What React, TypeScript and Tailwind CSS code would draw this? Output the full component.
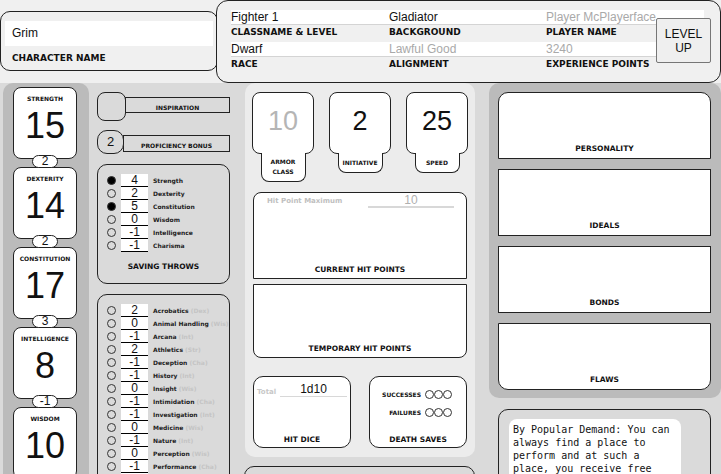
const label = "font-['DejaVu_Sans',sans-serif] font-bold uppercase text-[#111]"
const smallText = "font-['DejaVu_Sans',sans-serif] font-bold"

const abilities = [
  { name: 'Strength', score: 15, mod: '2' },
  { name: 'Dexterity', score: 14, mod: '2' },
  { name: 'Constitution', score: 17, mod: '3' },
  { name: 'Intelligence', score: 8, mod: '-1' },
  { name: 'Wisdom', score: 10, mod: '0' },
  { name: 'Charisma', score: 8, mod: '-1' },
]

const saves: [string, string, boolean][] = [
  ['Strength', '4', true],
  ['Dexterity', '2', false],
  ['Constitution', '5', true],
  ['Wisdom', '0', false],
  ['Intelligence', '-1', false],
  ['Charisma', '-1', false],
]

const skills: [string, string, string][] = [
  ['Acrobatics', 'Dex', '2'],
  ['Animal Handling', 'Wis', '0'],
  ['Arcana', 'Int', '-1'],
  ['Athletics', 'Str', '2'],
  ['Deception', 'Cha', '-1'],
  ['History', 'Int', '-1'],
  ['Insight', 'Wis', '0'],
  ['Intimidation', 'Cha', '-1'],
  ['Investigation', 'Int', '-1'],
  ['Medicine', 'Wis', '0'],
  ['Nature', 'Int', '-1'],
  ['Perception', 'Wis', '0'],
  ['Performance', 'Cha', '-1'],
  ['Persuasion', 'Cha', '-1'],
  ['Religion', 'Int', '-1'],
  ['Sleight of Hand', 'Dex', '2'],
  ['Stealth', 'Dex', '2'],
  ['Survival', 'Wis', '0'],
]

function HeaderField({ value, muted, name }: { value: string; muted?: boolean; name: string }) {
  return (
    <div>
      <div className={`h-[15px] border-b border-[#d4d4d4] bg-white text-[12px] leading-[14px] ${muted ? 'text-[#a9a9a9]' : 'text-[#111]'}`}>
        {value}
      </div>
      <div className={`h-[17px] text-[9px] leading-[14px] ${label}`}>{name}</div>
    </div>
  )
}

function Header() {
  return (
    <div className="flex h-[83px] bg-[#f0f0f0]">
      <div className="mt-[11px] h-[60px] w-[218px] shrink-0 rounded-[10px] border border-[#222] px-[4px] pt-[9px]">
        <div className="h-[25px] bg-white pl-[7px] text-[12px] leading-[25px]">Grim</div>
        <div className={`mt-[6px] pl-[7px] text-[9px] leading-[12px] ${label}`}>Character Name</div>
      </div>
      <div className="relative z-10 -ml-[2px] h-[83px] flex-1 rounded-[12px] border border-[#222] bg-[#f0f0f0] pl-[14px] pr-[16px] pt-[9px]">
        <div className="grid grid-cols-[158px_157px_1fr]">
          <HeaderField value="Fighter 1" name="Classname & Level" />
          <HeaderField value="Gladiator" name="Background" />
          <HeaderField value="Player McPlayerface" muted name="Player Name" />
          <HeaderField value="Dwarf" name="Race" />
          <HeaderField value="Lawful Good" muted name="Alignment" />
          <HeaderField value="3240" muted name="Experience Points" />
        </div>
        <button className="absolute right-[9px] top-[17px] h-[45px] w-[55px] rounded-[2px] border border-[#767676] bg-[#efefef] text-[12px] leading-[14px] text-[#111]">
          LEVEL
          <br />
          UP
        </button>
      </div>
    </div>
  )
}

function Ability({ name, score, mod }: { name: string; score: number; mod: string }) {
  return (
    <div className="flex w-[64px] flex-col items-center">
      <div className="flex h-[72px] w-[64px] flex-col items-center rounded-[8px] border border-[#222] bg-white">
        <div className={`mt-[8px] text-[6px] leading-[6px] ${label}`}>{name}</div>
        <div className="mt-[6px] text-[36px] leading-[36px] text-[#111]">{score}</div>
      </div>
      <div className="relative z-10 -mb-[1px] -mt-[4px] h-[13px] w-[26px] rounded-full border border-[#222] bg-white text-center text-[12px] leading-[11px]">
        {mod}
      </div>
    </div>
  )
}

function Dot({ filled }: { filled?: boolean }) {
  return <div className={`h-[9px] w-[9px] shrink-0 rounded-full border border-[#333] ${filled ? 'bg-black' : ''}`} />
}

function CheckRow({ filled, value, name, attr }: { filled?: boolean; value: string; name: string; attr?: string }) {
  return (
    <div className="flex h-[13px] items-center">
      <div className="ml-[9px]">
        <Dot filled={filled} />
      </div>
      <div className="ml-[5px] h-[13px] w-[27px] border-b border-black bg-white text-center text-[12px] leading-[12px]">{value}</div>
      <div className={`ml-[5px] whitespace-nowrap text-[6px] ${smallText} text-[#222]`}>
        {name}
        {attr && <span className="text-[#c4c4c4]"> ({attr})</span>}
      </div>
    </div>
  )
}

function StatBox({ value, muted, name, tall }: { value: string; muted?: boolean; name: string; tall?: boolean }) {
  return (
    <div className="flex w-[62px] flex-col items-center">
      <div className={`flex h-[62px] w-[62px] items-center justify-center rounded-[8px] border border-[#222] bg-white pb-[4px] text-[27px] ${muted ? 'text-[#b5b5b5]' : 'text-[#111]'}`}>
        {value}
      </div>
      <div className={`-mt-[1px] flex w-[45px] items-center justify-center rounded-b-[8px] border border-t-0 border-[#222] bg-white text-center text-[6px] leading-[10px] ${label} ${tall ? 'h-[29px]' : 'h-[20px]'}`}>
        {name}
      </div>
    </div>
  )
}

function Circles() {
  return (
    <div className="ml-[4px] flex">
      <div className="h-[9px] w-[9px] rounded-full border border-[#333]" />
      <div className="h-[9px] w-[9px] rounded-full border border-[#333]" />
      <div className="h-[9px] w-[9px] rounded-full border border-[#333]" />
    </div>
  )
}

export default function App() {
  return (
    <div className="min-h-screen bg-[#f0f0f0] font-['Liberation_Sans',sans-serif] text-[#111]">
      <Header />
      <main className="flex items-start bg-[#dadada] pb-[30px] pl-[3px]">
        {/* abilities */}
        <div className="w-[86px] rounded-[10px] bg-[#bbbbbb] pb-[10px] pl-[10px] pt-[4px]">
          {abilities.map((a) => (
            <Ability key={a.name} {...a} />
          ))}
        </div>

        {/* inspiration, proficiency, saves, skills */}
        <div className="ml-[8px] w-[133px] pt-[9px]">
          <div className="flex items-start">
            <div className="relative z-10 h-[29px] w-[29px] shrink-0 rounded-[8px] border border-[#222] bg-[#dadada]" />
            <div className={`-ml-[1px] mt-[5px] flex h-[16px] flex-1 items-end justify-center border border-[#222] pb-[1px] text-[6px] leading-[6px] ${label}`}>
              Inspiration
            </div>
          </div>
          <div className="mt-[9px] flex items-start">
            <div className="relative z-10 flex h-[24px] w-[27px] shrink-0 items-center justify-center rounded-[10px] border border-[#222] bg-[#dadada] text-[13px]">
              2
            </div>
            <div className={`-ml-[1px] mt-[5px] flex h-[17px] flex-1 items-end justify-center border border-[#222] pb-[2px] text-[6px] leading-[6px] ${label}`}>
              Proficiency Bonus
            </div>
          </div>

          <div className="mt-[10px] flex h-[120px] flex-col rounded-[10px] border border-[#222] pt-[9px]">
            {saves.map(([n, v, f]) => (
              <CheckRow key={n} name={n} value={v} filled={f} />
            ))}
            <div className={`mt-[10px] text-center text-[7.5px] leading-[10px] ${label}`}>Saving Throws</div>
          </div>

          <div className="mt-[10px] flex flex-col rounded-[10px] border border-[#222] pb-[10px] pt-[9px]">
            {skills.map(([n, a, v]) => (
              <CheckRow key={n} name={n} attr={a} value={v} />
            ))}
            <div className={`mt-[10px] text-center text-[7.5px] leading-[10px] ${label}`}>Skills</div>
          </div>
        </div>

        {/* combat */}
        <div className="ml-[15px] w-[230px]">
          <div className="rounded-[10px] bg-[#ececec] px-[7px] pb-[9px] pt-[9px]">
            <div className="flex items-start justify-between">
              <StatBox value="10" muted name="Armor Class" tall />
              <StatBox value="2" name="Initiative" />
              <StatBox value="25" name="Speed" />
            </div>

            <div className="mx-[1px] mt-[10px] flex h-[87px] flex-col rounded-t-[8px] border border-[#222] bg-white">
              <div className="flex items-center pl-[13px] pt-[1px]">
                <div className={`w-[101px] text-[7px] leading-[12px] ${smallText} text-[#c0c0c0]`}>Hit Point Maximum</div>
                <div className="w-[86px] border-b-2 border-[#d8d8d8] text-center text-[12px] leading-[12px] text-[#b0b0b0]">10</div>
              </div>
              <div className={`mt-auto pb-[4px] text-center text-[7.5px] leading-[9px] ${label}`}>Current Hit Points</div>
            </div>
            <div className="mx-[1px] mt-[5px] flex h-[74px] flex-col rounded-b-[8px] border border-[#222] bg-white">
              <div className={`mt-auto pb-[4px] text-center text-[7.5px] leading-[9px] ${label}`}>Temporary Hit Points</div>
            </div>

            <div className="mx-[1px] mt-[18px] flex justify-between">
              <div className="flex h-[72px] w-[98px] flex-col rounded-[10px] border border-[#222] bg-white">
                <div className="flex items-end pl-[3px] pt-[6px]">
                  <div className={`w-[23px] text-[7px] leading-[10px] ${smallText} text-[#c8c8c8]`}>Total</div>
                  <div className="w-[67px] border-b border-[#d8d8d8] text-center text-[12px] leading-[13px] text-[#111]">1d10</div>
                </div>
                <div className={`mt-auto pb-[3px] text-center text-[7.5px] leading-[9px] ${label}`}>Hit Dice</div>
              </div>
              <div className="flex h-[72px] w-[98px] flex-col rounded-[10px] border border-[#222] bg-white">
                <div className="mt-[13px] flex items-center justify-end pr-[14px]">
                  <div className={`text-[6px] leading-[9px] ${label}`}>Successes</div>
                  <Circles />
                </div>
                <div className="mt-[9px] flex items-center justify-end pr-[14px]">
                  <div className={`text-[6px] leading-[9px] ${label}`}>Failures</div>
                  <Circles />
                </div>
                <div className={`mt-auto pb-[3px] text-center text-[7.5px] leading-[9px] ${label}`}>Death Saves</div>
              </div>
            </div>
          </div>
          <div className="-ml-[1px] mt-[9px] h-[100px] rounded-t-[10px] border border-[#222]" />
        </div>

        {/* personality */}
        <div className="ml-[14px] flex-1">
          <div className="flex flex-col gap-[10px] rounded-[10px] bg-[#bbbbbb] pb-[8px] pl-[9px] pr-[10px] pt-[9px]">
            {['Personality', 'Ideals', 'Bonds', 'Flaws'].map((n, i) => (
              <div
                key={n}
                className={`flex h-[67px] flex-col justify-end border border-[#222] bg-white pb-[5px] text-center text-[7.5px] leading-[9px] ${label} ${i === 0 ? 'rounded-t-[10px]' : ''} ${i === 3 ? 'rounded-b-[10px]' : ''}`}
              >
                {n}
              </div>
            ))}
          </div>
          <div className="ml-[9px] mr-[10px] mt-[11px] h-[120px] rounded-t-[10px] border border-[#222] pl-[10px] pt-[9px]">
            <div className="w-[172px] rounded-[8px] bg-white px-[4px] pt-[4px] font-['DejaVu_Sans_Mono',monospace] text-[10px] leading-[13px] text-[#111]">
              By Popular Demand: You can always find a place to perform and at such a place, you receive free lodging and food of a modest or comfortable standard.
            </div>
          </div>
        </div>
      </main>
    </div>
  )
}
